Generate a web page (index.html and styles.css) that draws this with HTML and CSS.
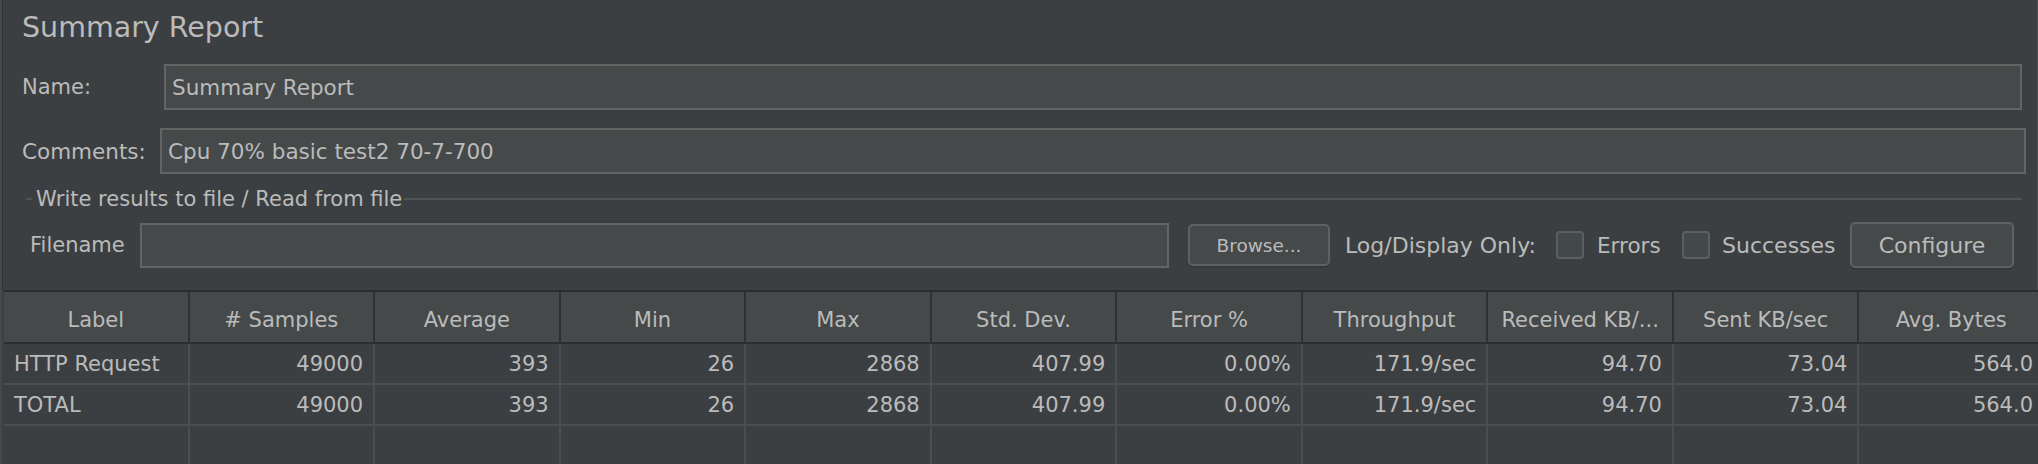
FILE: index.html
```html
<!DOCTYPE html>
<html>
<head>
<meta charset="utf-8">
<link rel="stylesheet" href="styles.css">
</head>
<body>
<div class="app">
  <div class="top">
    <div class="title">Summary Report</div>
    <div class="row name-row">
      <span class="lbl name-lbl">Name:</span>
      <div class="field">Summary Report</div>
    </div>
    <div class="row comments-row">
      <span class="lbl comments-lbl">Comments:</span>
      <div class="field">Cpu 70% basic test2 70-7-700</div>
    </div>
    <div class="group">
      <div class="group-title">
        <span class="gl-short"></span>
        <span class="gt">Write results to file / Read from file</span>
        <span class="gl-long"></span>
      </div>
      <div class="file-row">
        <span class="fn-lbl">Filename</span>
        <div class="field file-field"></div>
        <button class="btn browse">Browse...</button>
        <span class="log-lbl">Log/Display Only:</span>
        <span class="cb"></span>
        <span class="cb-lbl errors">Errors</span>
        <span class="cb"></span>
        <span class="cb-lbl successes">Successes</span>
        <button class="btn configure">Configure</button>
      </div>
    </div>
  </div>
  <div class="table">
    <div class="tr head">
      <div class="th">Label</div>
      <div class="th"># Samples</div>
      <div class="th">Average</div>
      <div class="th">Min</div>
      <div class="th">Max</div>
      <div class="th">Std. Dev.</div>
      <div class="th">Error %</div>
      <div class="th">Throughput</div>
      <div class="th">Received KB/...</div>
      <div class="th">Sent KB/sec</div>
      <div class="th">Avg. Bytes</div>
    </div>
    <div class="tr body-row">
      <div class="td txt">HTTP Request</div>
      <div class="td">49000</div>
      <div class="td">393</div>
      <div class="td">26</div>
      <div class="td">2868</div>
      <div class="td">407.99</div>
      <div class="td">0.00%</div>
      <div class="td">171.9/sec</div>
      <div class="td">94.70</div>
      <div class="td">73.04</div>
      <div class="td">564.0</div>
    </div>
    <div class="tr body-row">
      <div class="td txt">TOTAL</div>
      <div class="td">49000</div>
      <div class="td">393</div>
      <div class="td">26</div>
      <div class="td">2868</div>
      <div class="td">407.99</div>
      <div class="td">0.00%</div>
      <div class="td">171.9/sec</div>
      <div class="td">94.70</div>
      <div class="td">73.04</div>
      <div class="td">564.0</div>
    </div>
    <div class="tr empty-row">
      <div class="td"></div><div class="td"></div><div class="td"></div><div class="td"></div>
      <div class="td"></div><div class="td"></div><div class="td"></div><div class="td"></div>
      <div class="td"></div><div class="td"></div><div class="td"></div>
    </div>
  </div>
</div>
</body>
</html>
```

FILE: styles.css
```css
html, body {
  margin: 0;
  padding: 0;
}
body {
  width: 2038px;
  height: 464px;
  overflow: hidden;
  background: #3c3f41;
  color: #bbbbbb;
  font-family: "DejaVu Sans", "Liberation Sans", sans-serif;
  font-size: 21px;
}
.app {
  width: 2036px;
  height: 464px;
  border-left: 2px solid #46494b;
  overflow: hidden;
}
.top {
  height: 290px;
  box-sizing: border-box;
  border-left: 1px solid #2f3133;
  border-right: 1px solid #4a4d4f;
  padding-left: 19px;
  display: flex;
  flex-direction: column;
}
.title {
  margin-top: 11px;
  height: 34px;
  line-height: 34px;
  font-size: 28.5px;
  white-space: nowrap;
}
.row {
  display: flex;
  align-items: center;
  height: 46px;
}
.name-row {
  margin-top: 19px;
  margin-right: 15px;
}
.comments-row {
  margin-top: 18px;
  margin-right: 11px;
}
.lbl {
  flex: none;
  white-space: nowrap;
}
.name-lbl { width: 142px; }
.comments-lbl { width: 138px; font-size: 21.5px; }
.field {
  flex: 1;
  height: 46px;
  box-sizing: border-box;
  border: 2px solid #646464;
  background: #45494a;
  padding-left: 6px;
  display: flex;
  align-items: center;
  white-space: nowrap;
  font-size: 21.5px;
}
.group {
  margin-left: 4px;
  margin-right: 15px;
}
.group-title {
  margin-top: 13px;
  height: 24px;
  display: flex;
  align-items: center;
}
.gl-short {
  width: 6px;
  height: 2px;
  background: #515457;
  margin-right: 4px;
}
.gt {
  white-space: nowrap;
  margin-right: 2px;
}
.gl-long {
  flex: 1;
  height: 2px;
  background: #515457;
}
.file-row {
  margin-top: 11px;
  height: 46px;
  display: flex;
  align-items: center;
  padding-left: 4px;
  white-space: nowrap;
}
.fn-lbl {
  width: 96px;
  margin-right: 14px;
}
.file-field {
  flex: none;
  width: 1029px;
  height: 45px;
}
.btn {
  font-family: "DejaVu Sans", "Liberation Sans", sans-serif;
  color: #bbbbbb;
  background: #45494a;
  border: 2px solid #5e6163;
  border-radius: 5px;
  box-shadow: 0 2px 0 #36383a;
  padding: 0;
  box-sizing: border-box;
}
.browse {
  margin-left: 19px;
  width: 142px;
  height: 42px;
  font-size: 18.5px;
}
.log-lbl {
  margin-left: 15px;
  width: 189px;
  font-size: 22px;
}
.cb {
  width: 28px;
  height: 28px;
  box-sizing: border-box;
  border: 2px solid #5c5f61;
  border-radius: 4px;
  background: #43494a;
  margin-left: 22px;
}
.cb-lbl {
  margin-left: 13px;
  font-size: 21.5px;
}
.errors { width: 63px; }
.successes { width: 113px; margin-left: 12px; font-size: 22px; }
.configure {
  margin-left: 15px;
  width: 164px;
  height: 46px;
  font-size: 22px;
}
.table {
  margin-left: 2px;
  width: 2041px;
  border-top: 2px solid #2b2d2f;
}
.tr {
  display: grid;
  grid-template-columns: repeat(11, 1fr);
}
.head {
  height: 52px;
  box-sizing: border-box;
  background: #45494a;
  border-bottom: 2px solid #2b2d2f;
}
.th {
  border-right: 2px solid #2f3133;
  display: flex;
  align-items: center;
  justify-content: center;
  padding-top: 5px;
  white-space: nowrap;
}
.body-row {
  height: 39px;
  border-bottom: 2px solid #4b4e50;
  background: #3c3f41;
}
.td {
  border-right: 2px solid #4b4e50;
  display: flex;
  align-items: center;
  justify-content: flex-end;
  padding-right: 10px;
  padding-top: 1px;
  white-space: nowrap;
}
.td.txt {
  justify-content: flex-start;
  padding-left: 10px;
  padding-right: 0;
}
.empty-row {
  height: 60px;
}
```
